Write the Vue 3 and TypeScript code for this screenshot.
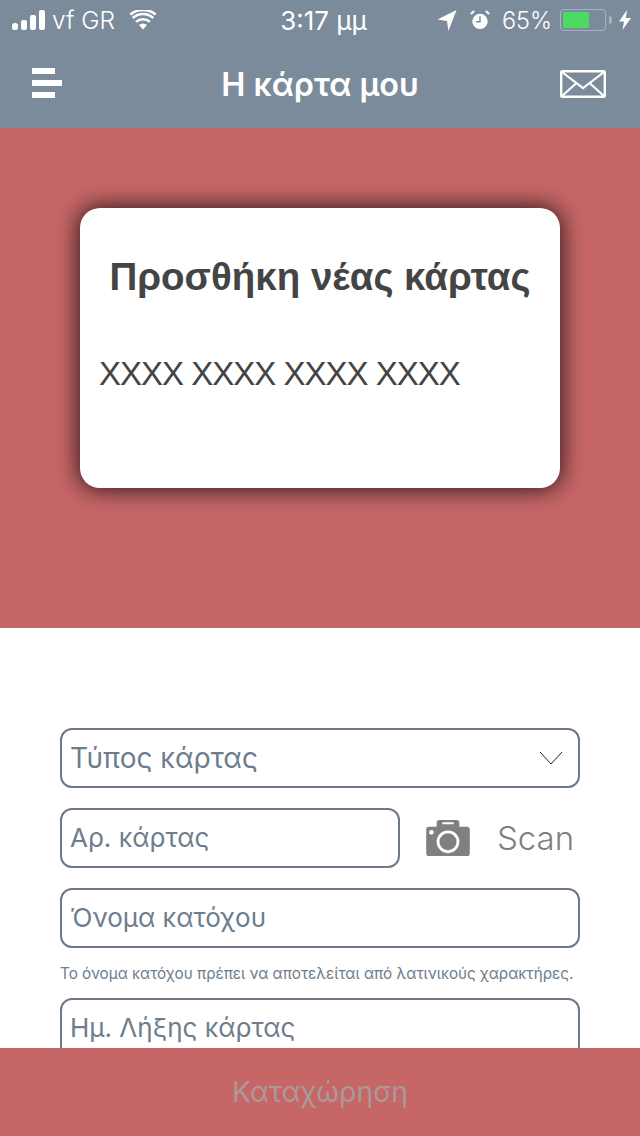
<script setup lang="ts">
const cardDigits = 'XXXX XXXX XXXX XXXX'
</script>

<template>
  <div class="screen">
    <header class="top">
      <div class="status">
        <div class="status-left">
          <svg class="signal" width="33" height="20" viewBox="0 0 33 20">
            <rect x="0" y="13" width="6" height="7" rx="2.500" />
            <rect x="9" y="10" width="6" height="10" rx="2" />
            <rect x="18" y="5" width="6" height="15" rx="2" />
            <rect x="27" y="0" width="6" height="20" rx="2" />
          </svg>
          <span class="carrier">vf GR</span>
          <svg class="wifi" width="28" height="20" viewBox="0 0 30 22">
            <path d="M15 21.500 10.600 16.600a6.600 6.600 0 0 1 8.800 0Z" fill="#fff" />
            <path d="M7.300 12.600a11.500 11.500 0 0 1 15.400 0M3.700 8.300a17 17 0 0 1 22.600 0M1 4.500a22 22 0 0 1 28 0" fill="none" stroke="#fff" stroke-width="2.800" transform="translate(0 0.500)" />
          </svg>
        </div>
        <span class="clock">3:17 μμ</span>
        <div class="status-right">
          <svg width="20" height="21" viewBox="0 0 20 22"><path d="M20 0 11.500 22 10 11.500 0 10Z" fill="#fff" /></svg>
          <svg class="alarm" width="20" height="20" viewBox="0 0 22 22">
            <circle cx="11" cy="12.500" r="8.500" fill="#fff" />
            <path d="M11 7v6H6.500" fill="none" stroke="#7c8b9b" stroke-width="1.600" />
            <path d="M1 4.500 4.500 1M21 4.500 17.500 1" stroke="#fff" stroke-width="2.400" />
          </svg>
          <span class="battery-pct">65%</span>
          <div class="battery"><div class="battery-fill" :style="{ width: '65%' }"></div></div>
          <div class="battery-nub"></div>
          <svg class="bolt" width="12" height="20" viewBox="0 0 12 20"><path d="M8 0 0 11.500H5L3.500 20 12 8H6.800Z" fill="#fff" /></svg>
        </div>
      </div>
      <nav class="nav">
        <svg width="32" height="32" viewBox="0 0 32 32" class="menu">
          <rect x="0" y="0" width="23" height="6" />
          <rect x="0" y="12" width="30" height="6" />
          <rect x="0" y="24" width="23" height="6" />
        </svg>
        <h1 class="nav-title">Η κάρτα μου</h1>
        <svg width="46" height="28" viewBox="0 0 46 28" class="mail">
          <rect x="1.200" y="1.200" width="43.600" height="25.600" rx="1" fill="none" stroke="#fff" stroke-width="2.400" />
          <path d="M2 2 23 18 44 2M2 26 16.500 13M44 26 29.500 13" fill="none" stroke="#fff" stroke-width="2.200" />
        </svg>
      </nav>
    </header>

    <main class="content">
      <section class="hero">
        <div class="card">
          <h2 class="card-title">Προσθήκη νέας κάρτας</h2>
          <p class="card-digits">{{ cardDigits }}</p>
        </div>
      </section>

      <form class="form">
        <div class="field select">
          <span class="big">Τύπος κάρτας</span>
          <svg width="24" height="14" viewBox="0 0 24 14"><path d="M1 1 12 13 23 1" fill="none" stroke="#222" stroke-width="1" /></svg>
        </div>
        <div class="scan-row">
          <div class="field short"><span>Αρ. κάρτας</span></div>
          <svg class="camera" width="44" height="36" viewBox="0 0 46 38">
            <path fill-rule="evenodd" fill="#808080" d="M11 3a3 3 0 0 1 3-3h18a3 3 0 0 1 3 3v4h8a3 3 0 0 1 3 3v25a3 3 0 0 1-3 3H3a3 3 0 0 1-3-3V10a3 3 0 0 1 3-3h8ZM17 2.500v2h12v-2ZM23 11a12 12 0 1 0 0 24 12 12 0 0 0 0-24ZM23 14a9 9 0 1 1 0 18 9 9 0 0 1 0-18ZM5.500 10.500a2.500 2.500 0 1 0 0 5 2.500 2.500 0 0 0 0-5Z" />
            <circle cx="23" cy="23" r="7.500" fill="#808080" />
          </svg>
          <span class="scan">Scan</span>
        </div>
        <div class="field"><span>Όνομα κατόχου</span></div>
        <p class="hint">Το όνομα κατόχου πρέπει να αποτελείται από λατινικούς χαρακτήρες.</p>
        <div class="field"><span>Ημ. Λήξης κάρτας</span></div>
      </form>
    </main>

    <footer class="submit">Καταχώρηση</footer>
  </div>
</template>

<style>
html, body { margin: 0; background: #fff; }
</style>

<style scoped>
.screen {
  width: 640px;
  height: 1136px;
  display: flex;
  flex-direction: column;
  overflow: hidden;
  font-family: Inter, "Noto Sans", sans-serif;
  background: #fff;
}
.top {
  height: 128px;
  flex: none;
  background: #7c8b9b;
  color: #fff;
}
.status {
  height: 40px;
  box-sizing: border-box;
  padding: 0 9px 0 12px;
  display: grid;
  grid-template-columns: 1fr auto 1fr;
  align-items: center;
}
.status-left, .status-right { display: flex; align-items: center; }
.status-right { justify-content: flex-end; }
.signal { fill: #fff; }
.carrier { margin-left: 7px; font-size: 24.500px; font-weight: 300; }
.wifi { margin-left: 14px; }
.clock { font-size: 26px; margin-left: 4px; }
.alarm { margin-left: 13px; }
.battery-pct { margin-left: 12px; font-size: 23.500px; font-weight: 300; }
.battery {
  width: 46px;
  height: 22px;
  margin-left: 8px;
  box-sizing: border-box;
  border: 1.500px solid #a9b2bd;
  border-radius: 4px;
  padding: 2px;
}
.battery-fill { height: 100%; background: #4cd964; border-radius: 1px; }
.battery-nub { width: 3px; height: 8px; margin-left: 3px; background: #a9b2bd; border-radius: 0 3px 3px 0; }
.bolt { margin-left: 7px; }
.nav {
  height: 88px;
  padding: 0 34px 0 32px;
  display: flex;
  align-items: center;
  justify-content: space-between;
}
.menu { fill: #fff; }
.nav-title { margin: 0 0 0 16px; font-size: 32.300px; font-weight: 600; }
.content { flex: 1; min-height: 0; overflow: hidden; }
.hero {
  height: 500px;
  display: flex;
  justify-content: center;
  padding-top: 80px;
  box-sizing: border-box;
  background: #c66667;
}
.card {
  width: 480px;
  height: 280px;
  box-sizing: border-box;
  padding: 45px 19px 0;
  background: #fff;
  border-radius: 20px;
  box-shadow: 0 0 22px 2px rgba(30, 15, 15, 0.88);
  color: #444;
  font-family: "Liberation Sans", Arial, sans-serif;
}
.card-title { margin: 0; font-size: 38.500px; font-weight: 700; line-height: 48px; text-align: center; white-space: nowrap; }
.card-digits { margin: 53px 0 0; font-size: 33px; line-height: 40px; letter-spacing: -1px; white-space: nowrap; }
.form {
  padding: 100px 60px 0;
  display: flex;
  flex-direction: column;
  gap: 20px;
}
.field {
  height: 60px;
  flex: none;
  box-sizing: border-box;
  border: 2px solid #6c7a87;
  border-radius: 12px;
  padding: 0 8px 2px;
  display: flex;
  align-items: center;
  font-size: 26px;
  color: #6d7d8d;
}
.select { justify-content: space-between; padding: 0 15px 0 8px; font-size: 28px; }
.scan-row { display: flex; align-items: center; }
.short { width: 340px; }
.camera { margin-left: 26px; }
.scan { margin-left: 27px; font-size: 33px; font-weight: 300; color: #808080; }
.hint {
  margin: -4px 0 -6px;
  font-size: 15.250px;
  line-height: 20px;
  color: #6d7d8d;
  white-space: nowrap;
}
.submit {
  height: 88px;
  flex: none;
  display: flex;
  align-items: center;
  justify-content: center;
  background: #c66667;
  color: #aa9999;
  font-size: 28.300px;
}
</style>
